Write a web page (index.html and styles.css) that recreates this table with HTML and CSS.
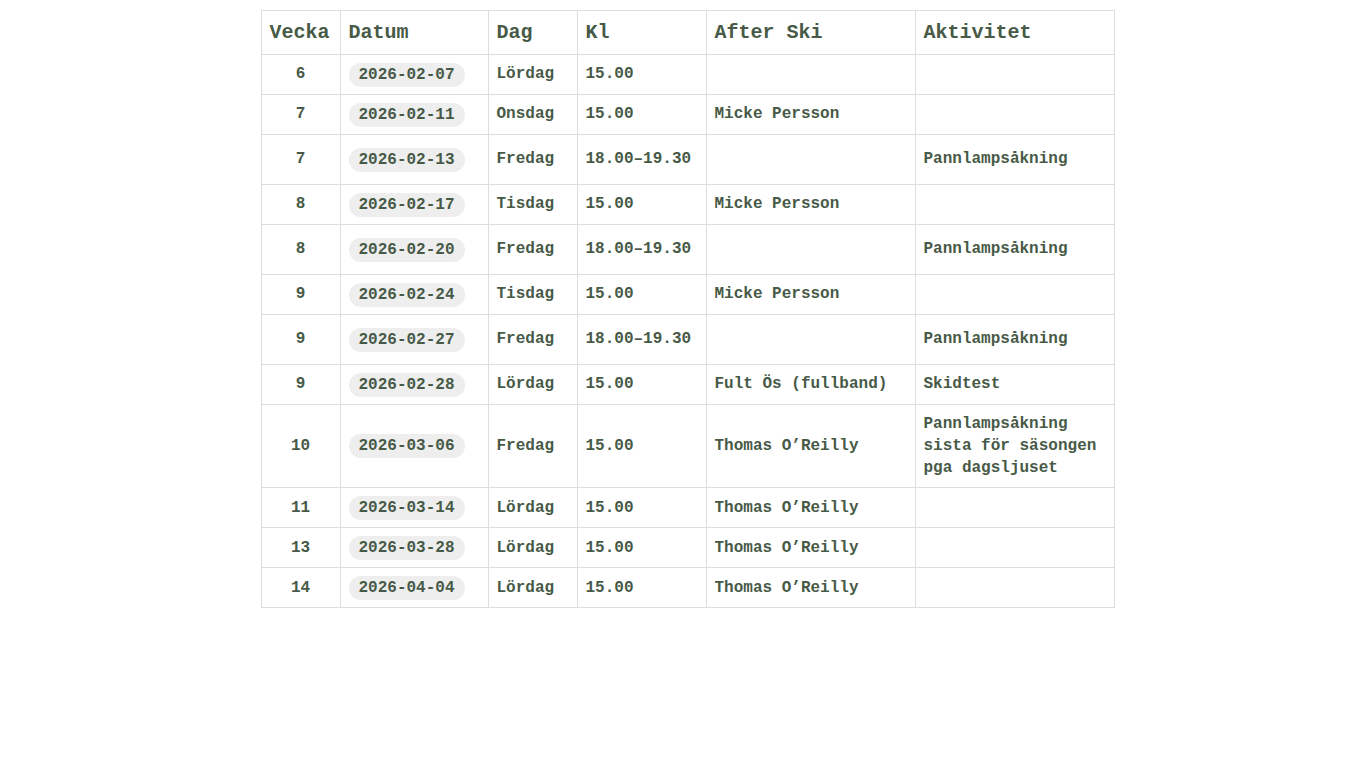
FILE: index.html
```html
<!DOCTYPE html>
<html lang="sv">
<head>
<meta charset="utf-8">
<title>After Ski</title>
<link rel="stylesheet" href="styles.css">
</head>
<body>
<div class="page">
<table class="schedule">
  <colgroup>
    <col class="c-week"><col class="c-date"><col class="c-day"><col class="c-time"><col class="c-after"><col class="c-act">
  </colgroup>
  <thead>
    <tr><th>Vecka</th><th>Datum</th><th>Dag</th><th>Kl</th><th>After Ski</th><th>Aktivitet</th></tr>
  </thead>
  <tbody>
    <tr><td class="week">6</td><td><span class="pill">2026-02-07</span></td><td>Lördag</td><td>15.00</td><td></td><td></td></tr>
    <tr><td class="week">7</td><td><span class="pill">2026-02-11</span></td><td>Onsdag</td><td>15.00</td><td>Micke Persson</td><td></td></tr>
    <tr><td class="week">7</td><td><span class="pill">2026-02-13</span></td><td>Fredag</td><td>18.00–19.30</td><td></td><td class="act">Pannlampsåkning</td></tr>
    <tr><td class="week">8</td><td><span class="pill">2026-02-17</span></td><td>Tisdag</td><td>15.00</td><td>Micke Persson</td><td></td></tr>
    <tr><td class="week">8</td><td><span class="pill">2026-02-20</span></td><td>Fredag</td><td>18.00–19.30</td><td></td><td class="act">Pannlampsåkning</td></tr>
    <tr><td class="week">9</td><td><span class="pill">2026-02-24</span></td><td>Tisdag</td><td>15.00</td><td>Micke Persson</td><td></td></tr>
    <tr><td class="week">9</td><td><span class="pill">2026-02-27</span></td><td>Fredag</td><td>18.00–19.30</td><td></td><td class="act">Pannlampsåkning</td></tr>
    <tr><td class="week">9</td><td><span class="pill">2026-02-28</span></td><td>Lördag</td><td>15.00</td><td>Fult Ös (fullband)</td><td>Skidtest</td></tr>
    <tr><td class="week">10</td><td><span class="pill">2026-03-06</span></td><td>Fredag</td><td>15.00</td><td>Thomas O’Reilly</td><td>Pannlampsåkning sista för säsongen pga dagsljuset</td></tr>
    <tr><td class="week">11</td><td><span class="pill">2026-03-14</span></td><td>Lördag</td><td>15.00</td><td>Thomas O’Reilly</td><td></td></tr>
    <tr><td class="week">13</td><td><span class="pill">2026-03-28</span></td><td>Lördag</td><td>15.00</td><td>Thomas O’Reilly</td><td></td></tr>
    <tr><td class="week">14</td><td><span class="pill">2026-04-04</span></td><td>Lördag</td><td>15.00</td><td>Thomas O’Reilly</td><td></td></tr>
  </tbody>
</table>
</div>
</body>
</html>
```
FILE: styles.css
```css
html, body {
  margin: 0;
  padding: 0;
  background: #ffffff;
}
.page {
  display: flex;
  justify-content: center;
  padding: 10px 0 0 9px;
}
.schedule {
  border-collapse: collapse;
  table-layout: fixed;
  width: 853px;
  font-family: "Liberation Mono", "Courier New", monospace;
  font-weight: bold;
  color: #475a47;
  border: 1px solid #dedede;
}
.c-week { width: 79px; }
.c-date { width: 148px; }
.c-day { width: 89px; }
.c-time { width: 129px; }
.c-after { width: 209px; }
.c-act { width: 199px; }
.schedule th,
.schedule td {
  border: 1px solid #dedede;
  padding: 7.5px 8px;
  text-align: left;
  vertical-align: middle;
}
.schedule th {
  font-size: 20px;
  line-height: 27px;
  padding-top: 8px;
  padding-bottom: 8px;
}
.schedule td {
  font-size: 16px;
  line-height: 22.4px;
}
.schedule td.week {
  text-align: center;
}
.schedule td.act {
  padding-top: 13.3px;
  padding-bottom: 13.3px;
}
.pill {
  display: inline-block;
  background: #eeeeee;
  border-radius: 12px;
  padding: 0 10px;
  height: 24px;
  line-height: 24px;
  vertical-align: middle;
}
```
